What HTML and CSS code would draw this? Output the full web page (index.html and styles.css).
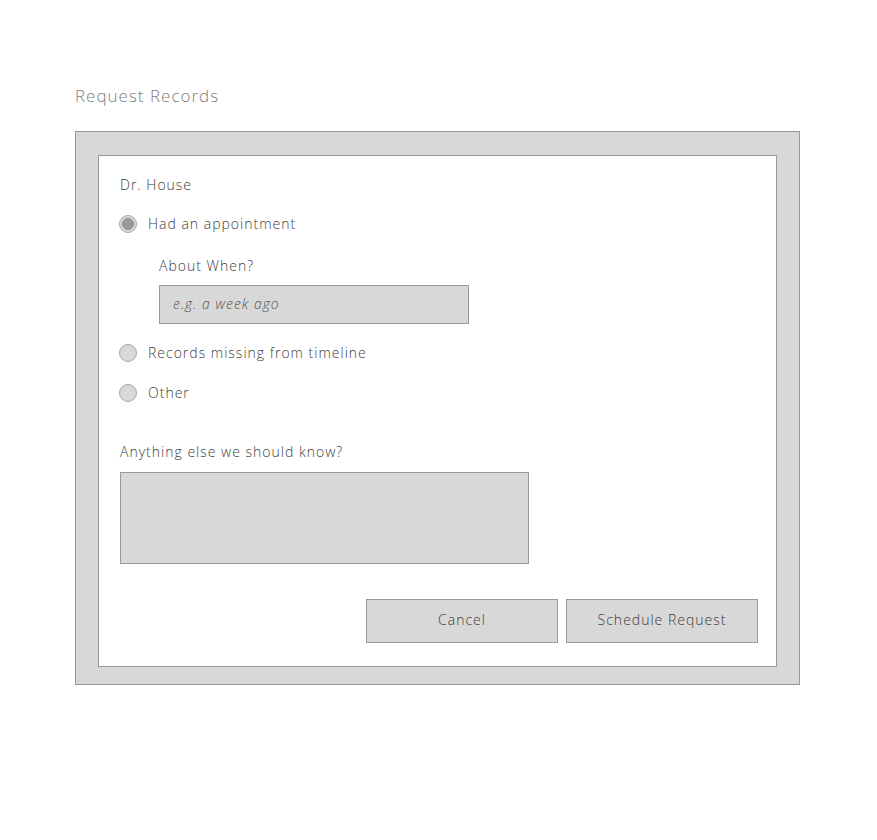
FILE: index.html
```html
<!DOCTYPE html>
<html lang="en">
<head>
<meta charset="utf-8">
<title>Request Records</title>
<link rel="stylesheet" href="styles.css">
</head>
<body>
<main class="page">
  <h1 class="title">Request Records</h1>
  <section class="panel">
    <form class="card">
      <div class="doctor">Dr. House</div>
      <label class="option option-first">
        <input class="radio" type="radio" name="reason" checked>
        <span>Had an appointment</span>
      </label>
      <div class="when">
        <div class="when-label">About When?</div>
        <input class="text-input" type="text" placeholder="e.g. a week ago">
      </div>
      <label class="option option-gap">
        <input class="radio" type="radio" name="reason">
        <span>Records missing from timeline</span>
      </label>
      <label class="option option-gap">
        <input class="radio" type="radio" name="reason">
        <span>Other</span>
      </label>
      <div class="notes-label">Anything else we should know?</div>
      <textarea class="notes"></textarea>
      <div class="actions">
        <button type="button" class="btn">Cancel</button>
        <button type="button" class="btn">Schedule Request</button>
      </div>
    </form>
  </section>
</main>
</body>
</html>
```

FILE: styles.css
```css
* { box-sizing: border-box; }

html, body {
  margin: 0;
  padding: 0;
  background: #ffffff;
}

body {
  font-family: "Open Sans", "Liberation Sans", sans-serif;
  font-size: 14px;
  font-weight: 300;
  line-height: 20px;
  color: #3c3c3c;
  letter-spacing: 1px;
}

.page {
  padding: 84px 0 0 75px;
}

.title {
  margin: 0 0 23px 0;
  font-size: 17px;
  line-height: 24px;
  font-weight: 300;
  color: #808080;
  letter-spacing: 1px;
}

.panel {
  width: 725px;
  background: #d8d8d8;
  border: 1px solid #999999;
  padding: 23px 22px 17px 22px;
}

.card {
  display: flex;
  flex-direction: column;
  background: #ffffff;
  border: 1px solid #999999;
  padding: 19px 18px 23px 21px;
  margin: 0;
}

.doctor {
  height: 20px;
}

.option {
  display: flex;
  align-items: center;
  height: 20px;
  margin-left: -1px;
  cursor: pointer;
}

.option-first { margin-top: 19px; }
.option-gap { margin-top: 19px; }
.option-gap + .option-gap { margin-top: 20px; }

.radio {
  appearance: none;
  -webkit-appearance: none;
  width: 18px;
  height: 18px;
  margin: 0 11px 0 0;
  border: 1px solid #aaaaaa;
  border-radius: 50%;
  background: #d8d8d8;
  display: grid;
  place-items: center;
}

.radio:checked::before {
  content: "";
  width: 10px;
  height: 10px;
  border-radius: 50%;
  background: #999999;
  border: 1px solid #8c8c8c;
}

.when {
  display: flex;
  flex-direction: column;
  align-items: flex-start;
  margin: 22px 0 0 39px;
}

.when-label {
  height: 20px;
}

.text-input {
  margin-top: 9px;
  width: 310px;
  height: 39px;
  background: #d8d8d8;
  border: 1px solid #999999;
  padding: 0 0 2px 13px;
  font-family: inherit;
  font-size: 14px;
  font-weight: 300;
  letter-spacing: 1px;
  color: #3c3c3c;
  outline: none;
}

.text-input::placeholder {
  font-style: italic;
  color: #555555;
  opacity: 1;
}

.notes-label {
  margin-top: 39px;
  height: 20px;
}

.notes {
  margin-top: 10px;
  width: 409px;
  height: 92px;
  background: #d8d8d8;
  border: 1px solid #999999;
  resize: none;
  font-family: inherit;
  outline: none;
  display: block;
}

.actions {
  display: flex;
  justify-content: flex-end;
  gap: 8px;
  margin-top: 35px;
}

.btn {
  width: 192px;
  height: 44px;
  background: #d8d8d8;
  border: 1px solid #999999;
  font-family: inherit;
  font-size: 14px;
  font-weight: 300;
  line-height: 20px;
  letter-spacing: 1px;
  color: #3c3c3c;
  padding: 0 0 3px 0;
  cursor: pointer;
}
```
